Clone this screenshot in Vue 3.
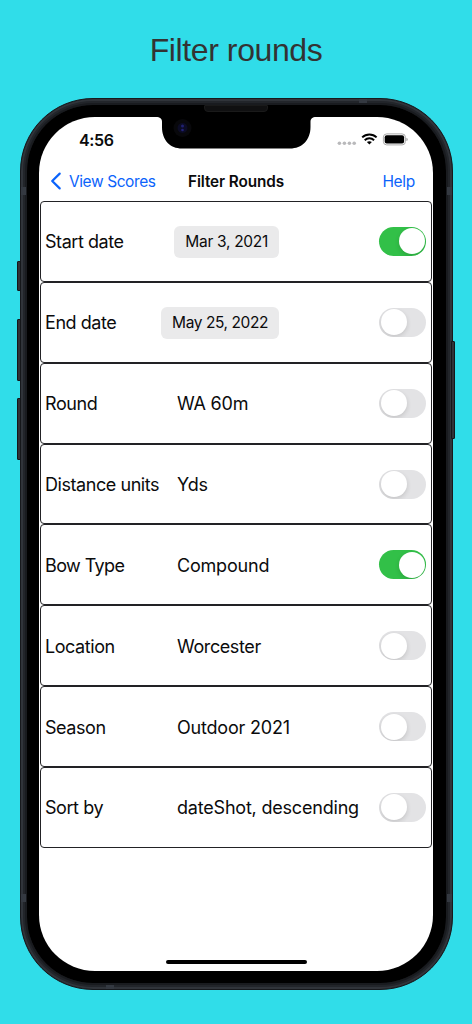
<template>
  <main class="poster">
    <h1 class="title"><span>Filter rounds</span></h1>

    <div class="phone">
      <i v-for="b in buttons" :key="b" :class="['hw-button', b]"></i>
      <i v-for="a in antennas" :key="a" :class="['antenna', a]"></i>
      <div class="bezel">
        <i class="speaker"></i>
        <div class="screen">
          <svg class="notch" width="160" height="32" viewBox="0 0 160 32">
            <path d="M0 0H160C156.5 0 154.5 1.5 154.5 5V10C154.5 23 146 31.5 134 31.5H26C14 31.5 6 23 6 10V5C6 1.5 4 0 0 0Z" fill="#000" />
            <circle cx="26.5" cy="11" r="9" fill="#08080b" />
            <circle cx="26.5" cy="11" r="5" fill="#0c0c25" />
            <circle cx="26.5" cy="9" r="1.5" fill="#202070" />
            <circle cx="26.5" cy="13" r="1.3" fill="#222278" />
          </svg>

          <div class="status-bar">
            <span class="time">4:56</span>
            <svg class="status-icons" width="72" height="14" viewBox="0 0 72 14">
              <g fill="#b9b9bb">
                <circle cx="2.4" cy="11.3" r="1.8" />
                <circle cx="7.4" cy="11.3" r="1.8" />
                <circle cx="12.4" cy="11.3" r="1.8" />
                <circle cx="17.2" cy="11.3" r="1.8" />
              </g>
              <g fill="none" stroke="#000" stroke-width="2">
                <path d="M25.2 5.4C29.2 1.5 35.6 1.5 39.6 5.4" />
                <path d="M27.7 8.2C30.4 5.7 34.4 5.7 37.1 8.2" />
              </g>
              <path d="M32.4 12.6L29.9 10.1C31.3 8.9 33.5 8.9 34.9 10.1Z" fill="#000" />
              <rect x="46.4" y="1.9" width="22" height="11" rx="3.3" fill="none" stroke="#aaa" stroke-width="1" />
              <rect x="47.7" y="3.2" width="19.4" height="8.4" rx="2" fill="#000" />
              <path d="M69.5 5.7C71 6.2 71 8.6 69.5 9.1Z" fill="#888" />
            </svg>
          </div>

          <nav class="nav-bar">
            <a class="back">
              <svg width="12" height="18" viewBox="0 0 12 18">
                <path d="M9.7 1.6L2.2 9L9.7 16.4" />
              </svg>
              <span>View Scores</span>
            </a>
            <strong class="nav-title">Filter Rounds</strong>
            <a class="help">Help</a>
          </nav>

          <ul class="filters">
            <li v-for="row in rows" :key="row.id" :class="['row', row.id]">
              <span class="label">{{ row.label }}</span>
              <div :class="['field', { date: row.date }]">
                <span class="value">{{ row.value }}</span>
              </div>
              <span :class="['toggle', { on: row.on }]"></span>
            </li>
          </ul>

          <i class="home-indicator"></i>
        </div>
      </div>
    </div>
  </main>
</template>

<script setup>
import { ref } from 'vue';

const buttons = ['mute', 'volume-up', 'volume-down', 'power'];
const antennas = ['top', 'bottom', 'left-up', 'left-low', 'right-up', 'right-low'];

const rows = ref([
  { id: 'start', label: 'Start date', value: 'Mar 3, 2021', date: true, on: true },
  { id: 'end', label: 'End date', value: 'May 25, 2022', date: true, on: false },
  { id: 'round', label: 'Round', value: 'WA 60m', on: false },
  { id: 'units', label: 'Distance units', value: 'Yds', on: false },
  { id: 'bow', label: 'Bow Type', value: 'Compound', on: true },
  { id: 'location', label: 'Location', value: 'Worcester', on: false },
  { id: 'season', label: 'Season', value: 'Outdoor 2021', on: false },
  { id: 'sort', label: 'Sort by', value: 'dateShot, descending', on: false },
]);
</script>

<style>
body {
  margin: 0;
  background: #30dde9;
}
</style>

<style scoped>
.poster {
  box-sizing: border-box;
  width: 472px;
  height: 1024px;
  overflow: hidden;
  background: #30dde9;
  color: #0b0b0c;
  font-family: Inter, "Liberation Sans", sans-serif;
}

.title {
  height: 98px;
  margin: 0;
  padding-top: 30px;
  box-sizing: border-box;
  text-align: center;
  font: 400 32px/40px "Liberation Sans", Arial, sans-serif;
  letter-spacing: -0.4px;
  color: #333;
}

.phone {
  position: relative;
  box-sizing: border-box;
  width: 432.5px;
  height: 892px;
  margin-left: 20px;
  padding: 6px;
  border: 1px solid #17191d;
  border-radius: 73px;
  background: #2b2e34;
  box-shadow: inset 0 0 0 2px #30343a, inset 0 0 0 4px #22252a, inset 0 0 0 6px #191b1f;
}

.bezel {
  position: relative;
  box-sizing: border-box;
  height: 878px;
  padding: 12px;
  border-radius: 66px;
  background: #000;
}

.screen {
  position: relative;
  display: flex;
  flex-direction: column;
  width: 394px;
  height: 854px;
  border-radius: 56px;
  background: #fff;
  overflow: hidden;
}

.hw-button {
  position: absolute;
  left: -4px;
  width: 4px;
  box-sizing: border-box;
  border: 1px solid #15171a;
  border-radius: 1px 0 0 1px;
  background: #303338;
}

.mute { top: 162px; height: 30px; }
.volume-up { top: 220px; height: 62px; }
.volume-down { top: 299px; height: 62px; }
.power {
  top: 242px;
  left: auto;
  right: -3px;
  height: 98px;
  border-radius: 0 1px 1px 0;
}

.antenna {
  position: absolute;
  width: 5px;
  height: 8px;
  background: #343941;
}

.antenna.top, .antenna.bottom { width: 8px; height: 4px; }
.antenna.top { left: 338px; top: 0; }
.antenna.bottom { left: 85px; bottom: 0; }
.left-up, .left-low { left: 0; }
.right-up, .right-low { right: 0; }
.left-up, .right-up { top: 88px; }
.left-low, .right-low { top: 795px; }

.speaker {
  position: absolute;
  top: 0;
  left: 177px;
  box-sizing: border-box;
  width: 64px;
  height: 7px;
  border: 1px solid #1a1a1a;
  border-radius: 1px 1px 4px 4px;
  background: #101011;
}

.notch {
  position: absolute;
  top: 0;
  left: 117px;
}

.status-bar {
  display: flex;
  justify-content: space-between;
  height: 42px;
  padding: 12px 24px 0 40px;
  flex-shrink: 0;
  box-sizing: border-box;
}

.time {
  padding-top: 1px;
  font-size: 16px;
  line-height: 21px;
  font-weight: 600;
  letter-spacing: -0.35px;
}

.status-icons {
  margin-top: 3px;
}

.nav-bar {
  display: grid;
  grid-template-columns: 1fr auto 1fr;
  align-items: center;
  height: 42px;
  padding: 2px 18px 0 11px;
  flex-shrink: 0;
  box-sizing: border-box;
  font-size: 15.5px;
  white-space: nowrap;
}

.back, .help {
  color: #0b63fb;
}

.back {
  display: flex;
  align-items: center;
  gap: 7px;
  letter-spacing: -0.42px;
}

.back svg {
  margin-top: -1px;
}

.back path {
  fill: none;
  stroke: #0b63fb;
  stroke-width: 2.2;
  stroke-linecap: round;
  stroke-linejoin: round;
}

.nav-title {
  margin-left: 7px;
  font-size: 15.3px;
  font-weight: 600;
  letter-spacing: -0.1px;
}

.help {
  justify-self: end;
  letter-spacing: -0.3px;
}

.filters {
  margin: 0;
  padding: 0 1px;
  list-style: none;
}

.row {
  display: grid;
  grid-template-columns: 129px 1fr 47px;
  align-items: center;
  box-sizing: border-box;
  height: 80.86px;
  padding: 0 5px 0 4px;
  border: 1px solid #222225;
  border-radius: 4px;
  font-size: 18px;
  letter-spacing: -0.2px;
  white-space: nowrap;
}

.label {
  padding-top: 1px;
  letter-spacing: -0.44px;
}

.bow .label {
  letter-spacing: -0.6px;
}

.field {
  padding: 1px 0 0 3px;
}

.location .value {
  letter-spacing: -0.4px;
}

.field.date {
  display: flex;
  width: 105px;
  padding: 1px 0 0;
  justify-content: flex-end;
}

.date .value {
  padding: 0 11px;
  border-radius: 6px;
  background: #eaeaeb;
  font-size: 15.5px;
  line-height: 32px;
  letter-spacing: -0.3px;
}

.end .value {
  letter-spacing: -0.42px;
}

.toggle {
  display: flex;
  box-sizing: border-box;
  width: 47px;
  height: 29px;
  padding: 1.5px;
  border-radius: 15px;
  background: #e3e3e5;
  overflow: hidden;
}

.toggle::before {
  content: "";
  width: 26px;
  height: 26px;
  border-radius: 50%;
  background: #fff;
  box-shadow: 0 2px 5px rgba(0, 0, 0, 0.14);
}

.toggle.on {
  justify-content: flex-end;
  background: #32c048;
}

.home-indicator {
  position: absolute;
  bottom: 7px;
  left: 127px;
  width: 141px;
  height: 4.5px;
  border-radius: 3px;
  background: #000;
}
</style>
